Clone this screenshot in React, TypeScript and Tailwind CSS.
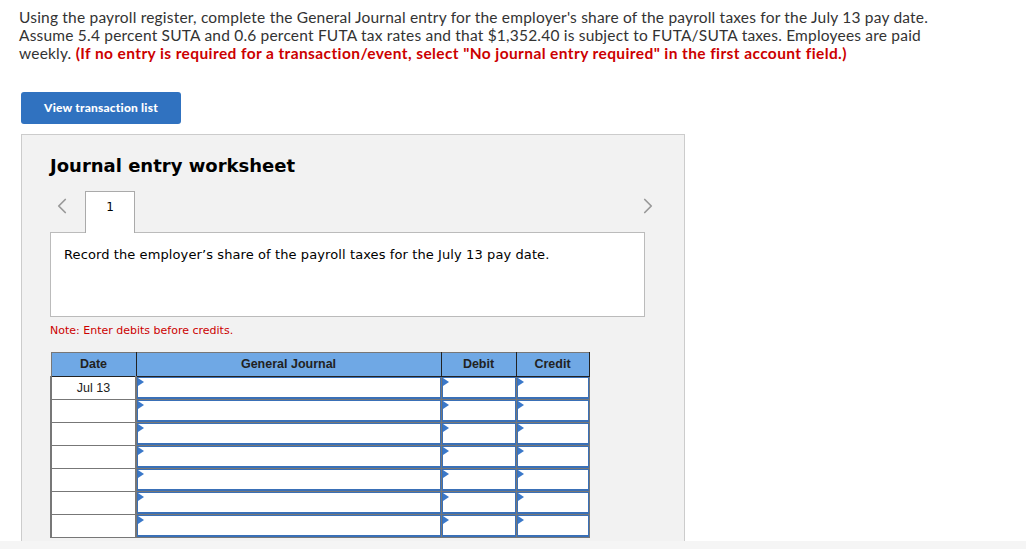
import { ChevronLeft, ChevronRight } from 'lucide-react';

const rows = ['Jul 13', '', '', '', '', '', ''];

function InputCell() {
  return (
    <td className="border border-[#777] p-0 h-[23px]">
      <div className="relative h-[22px] border border-b-2 border-[#3a70b7] bg-white">
        <span className="absolute left-0 top-0 w-0 h-0 border-y-[4px] border-y-transparent border-l-[6px] border-l-[#3a78c9]" />
      </div>
    </td>
  );
}

export default function App() {
  return (
    <div className="h-[549px] flex flex-col bg-white overflow-hidden">
      <div className="h-[541px] overflow-hidden">
        {/* Question */}
        <p className="pl-[19px] pt-[8px] text-[15.5px] leading-[18px] tracking-[0.2px] text-[#333] font-['Lato',sans-serif] whitespace-nowrap">
          Using the payroll register, complete the General Journal entry for the employer's share of the payroll taxes for the July 13 pay date.
          <br />
          Assume 5.4 percent SUTA and 0.6 percent FUTA tax rates and that $1,352.40 is subject to FUTA/SUTA taxes. Employees are paid
          <br />
          weekly.{' '}
          <b className="text-[#c00] tracking-[0.4px]">
            (If no entry is required for a transaction/event, select "No journal entry required" in the first account field.)
          </b>
        </p>

        <button className="ml-[21px] mt-[30px] w-[160px] h-[32px] rounded-[3px] bg-[#3072c0] text-white text-[12px] font-black tracking-[0.2px] font-['Lato',sans-serif]">
          View transaction list
        </button>

        {/* Worksheet */}
        <div className="ml-[21px] mt-[10px] w-[664px] h-[420px] bg-[#f2f2f2] border border-[#ccc] pl-[28px] pr-[39px] pt-[19px]">
          <h2 className="text-[18px] leading-[24px] font-bold text-black font-['DejaVu_Sans',Verdana,sans-serif]">
            Journal entry worksheet
          </h2>

          <div className="mt-[13px] flex items-end h-[41px] relative">
            <ChevronLeft className="absolute left-[-1px] top-[2px] w-[26px] h-[26px] text-[#999]" strokeWidth={1.6} />
            <div className="ml-[35px] w-[50px] h-[42px] -mb-px bg-white border border-[#aaa] border-b-0 z-10 flex justify-center pt-[6px] text-[12px] font-['DejaVu_Sans',sans-serif] text-black">
              1
            </div>
            <ChevronRight className="absolute right-[-16px] top-[2px] w-[26px] h-[26px] text-[#999]" strokeWidth={1.6} />
          </div>

          <div className="h-[85px] bg-white border border-[#bbb] pl-[13px] pt-[12px] text-[13px] tracking-[0.1px] font-['DejaVu_Sans',Verdana,sans-serif] text-black">
            Record the employer’s share of the payroll taxes for the July 13 pay date.
          </div>

          <p className="mt-[7px] text-[11px] leading-[14px] text-[#c00] font-['DejaVu_Sans',Verdana,sans-serif]">
            Note: Enter debits before credits.
          </p>

          <table className="mt-[14px] w-[538px] border-collapse table-fixed font-['Liberation_Sans',Arial,sans-serif] text-[12.5px] text-[#222]">
            <colgroup>
              <col className="w-[85px]" />
              <col className="w-[305px]" />
              <col className="w-[75px]" />
              <col className="w-[73px]" />
            </colgroup>
            <thead>
              <tr className="h-[24px] bg-[#6fa8e5] font-bold">
                <th className="border border-[#777] border-b-[#222] border-r-[#222]">Date</th>
                <th className="border border-[#777] border-b-[#222] border-x-[#222]">General Journal</th>
                <th className="border border-[#777] border-b-[#222] border-x-[#222]">Debit</th>
                <th className="border border-[#777] border-b-[#222] border-l-[#222] border-r-[#222]">Credit</th>
              </tr>
            </thead>
            <tbody>
              {rows.map((d, i) => (
                <tr key={i} className="h-[23px] bg-white">
                  <td className="border border-x-2 border-[#777] text-center font-normal">{d}</td>
                  <InputCell />
                  <InputCell />
                  <InputCell />
                </tr>
              ))}
            </tbody>
          </table>
        </div>
      </div>
      <div className="flex-1 bg-[#f5f5f5]" />
    </div>
  );
}
